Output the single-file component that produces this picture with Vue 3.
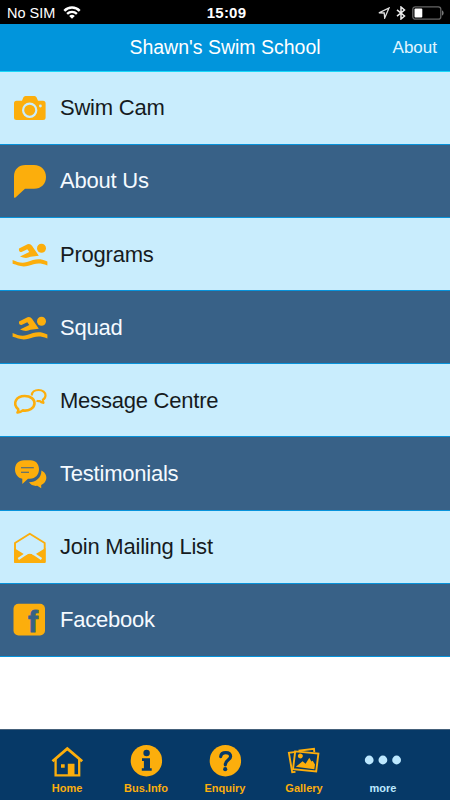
<template>
	<div class="screen">
		<header class="status-bar">
			<div class="carrier">
				<span>No SIM</span>
				<svg width="18" height="14" viewBox="0 0 18 14" fill="none" stroke="#fff" stroke-width="2.4">
					<path d="M1.300 4.800C5.500 .4 12.500 .4 16.700 4.800" />
					<path d="M4.100 7.900C6.900 5.200 11.100 5.200 13.900 7.900" />
					<path d="M6.200 9.900C8 8.500 10 8.500 11.800 9.900L9 12.700Z" fill="#fff" stroke="none" />
				</svg>
			</div>
			<div class="clock">15:09</div>
			<div class="indicators">
				<svg width="12" height="12" viewBox="0 0 12 12" fill="none" stroke="#ddd" stroke-width="1.3">
					<path d="M.9 5.800L11 1L6.700 11L6.200 6Z" />
				</svg>
				<svg width="10" height="14" viewBox="0 0 10 14" fill="none" stroke="#eee" stroke-width="1.5">
					<path d="M1 3.800L8.500 10L5 13V1L8.500 4L1 10.200" />
				</svg>
				<svg width="32" height="14" viewBox="0 0 32 14">
					<rect x=".8" y=".8" width="28" height="12.400" rx="2.500" fill="none" stroke="#666" stroke-width="1.300" />
					<rect x="2.500" y="2.500" width="7.800" height="9" rx="1" fill="#fff" />
					<path d="M30 4.500C32.200 5 32.200 9 30 9.500Z" fill="#777" />
				</svg>
			</div>
		</header>

		<nav class="nav-bar">
			<h1>Shawn's Swim School</h1>
			<a class="nav-action">About</a>
		</nav>

		<main class="menu">
			<div v-for="item in items" :key="item.label" class="menu-item">
				<svg class="menu-icon" viewBox="0 0 40 40">
					<template v-if="item.icon === 'camera'">
						<path class="solid" d="M6.500 12.700H12L13.300 9.500Q13.900 8 15.500 8H24.500Q26 8 26.600 9.500L28 12.700H33Q35.600 12.700 35.600 15.300V29.500Q35.600 32 33 32H6.500Q4 32 4 29.500V15.300Q4 12.700 6.500 12.700Z" />
						<circle class="line-cut" cx="19.700" cy="22.200" r="6.600" />
						<circle class="cut" cx="30.400" cy="18" r="1.400" />
					</template>
					<path v-else-if="item.icon === 'bubble'" class="solid" d="M4 36.300V15.500C4 8.500 8.500 4 15.500 4H24C31.300 4 36 9.200 36 16S31.300 27.800 24 27.800H15L5.500 36.400Q4 37.200 4 36.300Z" />
					<template v-else-if="item.icon === 'swimmer'">
						<circle class="solid" cx="31.500" cy="13.200" r="4.500" />
						<path class="solid" d="M9 13.500L17.500 9.300Q20.300 8.400 22 10.800L28.800 20.700L20.500 21.800Q16 24.200 10 21.500L19.300 17L17.300 14.300L11.500 17Q8.500 17 9 13.500Z" />
						<path class="solid" d="M2.600 25C7.500 27 11.500 28.800 17 27.100C24.500 24.500 28.500 22.500 37.400 26.400V30.400C28.500 26.900 24.500 29 18.500 30.700C11.500 32.700 8 30 2.600 28.800Z" />
					</template>
					<template v-else-if="item.icon === 'chat'">
						<path class="line" d="M8.200 28.300C1.800 22.300 6.500 15 14.700 15C20.700 15 24.500 18.200 24.500 22.300C24.500 27.500 18.500 30.300 12.800 29.400Q10.500 31.600 7.500 31.500Q8.700 29.900 8.200 28.300Z" />
						<path class="line thin" d="M21.800 14.500C21.800 11 24.700 9 28.600 9C32.800 9 35.500 11.500 35.500 14.300Q35.500 17.300 32.900 18.800Q32.800 20.600 33.500 21.800Q31 21.500 29.800 20Q27.800 20.300 26.500 19.800" />
					</template>
					<template v-else-if="item.icon === 'comments'">
						<path class="solid" d="M14 6.300H20.500C25.800 6.300 29 10.200 29 15.300S25.500 24.800 20 24.800H18L12.300 30V24.800C8 24 5 20.200 5 15.500C5 10 8.500 6.300 14 6.300Z" />
						<path class="solid" d="M31.400 16.500C36 18.500 38 24 34.800 28.200Q33.500 30 31.200 31V34.200L27.300 31.800C23.700 32.200 20.800 31 19 28.300C26 28 31.400 24 31.400 16.500Z" />
						<path class="stroke-cut" d="M11 13.700H23.800M11 18.300H19" />
					</template>
					<template v-else-if="item.icon === 'mail'">
						<path class="solid" d="M4.100 21L15.800 28.300Q19.800 24.800 23.800 28.300L35.500 21V34.500Q35.500 36 34 36H5.600Q4.100 36 4.100 34.500Z" />
						<path class="stroke-cut thick" d="M8.300 32L17.200 26Q19.800 24.700 22.500 26L31.500 32" />
						<path class="cut" d="M5 20.300L15.500 26.700Q19.800 23 24.200 26.700L34.700 20.300V16.300L19.800 7L5 16.300Z" />
						<path class="line envelope" d="M5 35V16L19.800 6.800L34.700 16V35Z" />
					</template>
					<template v-else>
						<rect class="solid" x="3.500" y="3.800" width="31.500" height="31.700" rx="5" />
						<text class="cut facebook-mark" x="18" y="31.800">f</text>
					</template>
				</svg>
				<span>{{ item.label }}</span>
			</div>
		</main>

		<footer class="tab-bar">
			<div v-for="tab in tabs" :key="tab.label" class="tab" :class="{ more: tab.icon === 'more' }">
				<svg class="tab-icon" viewBox="0 0 40 40">
					<template v-if="tab.icon === 'home'">
						<path class="roof" d="M5.500 20.200L20.300 7.700L35.200 20.200" />
						<path class="outline" d="M8.600 18V34.300H32.200V18" />
						<path class="solid" d="M20.800 22.700H27.500V34.500H20.800ZM14 23.200H17.700V26.800H14Z" />
					</template>
					<template v-else-if="tab.icon === 'info'">
						<circle class="solid" cx="20.400" cy="19.700" r="15.700" />
						<circle class="tab-cut" cx="20.600" cy="12" r="3.200" />
						<path class="tab-cut" d="M16 17.200H24V27.200H25.700V29.800H15.800V27.200H17.900V19.900H16Z" />
					</template>
					<template v-else-if="tab.icon === 'help'">
						<circle class="solid" cx="20.400" cy="19.700" r="15.700" />
						<path class="question" d="M15.700 15.600C16 12.800 18.200 11.600 20.800 11.600C23.600 11.600 25.600 13.100 25.600 15.600C25.600 19 20.500 18.800 20.300 23.800" />
						<circle class="tab-cut" cx="20.200" cy="28.200" r="2.100" />
					</template>
					<template v-else-if="tab.icon === 'gallery'">
						<path class="outline photo" d="M11.500 30.900L8.200 31.300L4.900 11.900L12 10.900M14.500 9.700L30 7.900L30.300 11" />
						<path class="outline photo" d="M11.200 10.400L34.400 12.600L32.200 30.400L9 28.200Z" />
						<path class="solid" d="M11.800 25.800L18.600 20.300L21.600 22.800L25.300 16.800L27.400 20.500L28.700 19.800L31 23.600L30.300 28.200ZM14 14.300A2.400 2.400 0 1 1 18.700 15.700A2.400 2.400 0 1 1 14 14.300Z" />
					</template>
					<template v-else>
						<circle class="solid" cx="6.200" cy="19" r="4.400" />
						<circle class="solid" cx="19.900" cy="19" r="4.400" />
						<circle class="solid" cx="33.600" cy="19" r="4.400" />
					</template>
				</svg>
				<span>{{ tab.label }}</span>
			</div>
		</footer>
	</div>
</template>

<script setup>
const items = [
	{ label: 'Swim Cam', icon: 'camera' },
	{ label: 'About Us', icon: 'bubble' },
	{ label: 'Programs', icon: 'swimmer' },
	{ label: 'Squad', icon: 'swimmer' },
	{ label: 'Message Centre', icon: 'chat' },
	{ label: 'Testimonials', icon: 'comments' },
	{ label: 'Join Mailing List', icon: 'mail' },
	{ label: 'Facebook', icon: 'facebook' },
]

const tabs = [
	{ label: 'Home', icon: 'home' },
	{ label: 'Bus.Info', icon: 'info' },
	{ label: 'Enquiry', icon: 'help' },
	{ label: 'Gallery', icon: 'gallery' },
	{ label: 'more', icon: 'more' },
]
</script>

<style>
body {
	margin: 0;
}
</style>

<style scoped>
.screen {
	display: flex;
	flex-direction: column;
	width: 450px;
	height: 800px;
	overflow: hidden;
	background: #fff;
	font-family: "Liberation Sans", Arial, sans-serif;
}

.status-bar {
	display: grid;
	grid-template-columns: 1fr auto 1fr;
	align-items: center;
	box-sizing: border-box;
	height: 24px;
	padding: 1px 6px 0 7px;
	background: #000;
	color: #fff;
	flex: none;
}

.carrier {
	display: flex;
	align-items: center;
	gap: 8px;
	font-size: 14.5px;
}

.clock {
	padding-left: 2px;
	font-size: 15px;
	font-weight: bold;
	letter-spacing: 0.2px;
}

.indicators {
	display: flex;
	justify-content: flex-end;
	align-items: center;
	gap: 6px;
}

.nav-bar {
	display: grid;
	grid-template-columns: 1fr auto 1fr;
	align-items: center;
	box-sizing: border-box;
	height: 47.7px;
	padding: 0 13px;
	border-bottom: 1px solid #1bd8f7;
	background: #0195dc;
	color: #fff;
	flex: none;
}

h1 {
	grid-column: 2;
	margin: 0;
	font-size: 19.5px;
	font-weight: normal;
}

.nav-action {
	justify-self: end;
	padding-top: 2px;
	color: #e2f5ff;
	font-size: 17px;
}

.menu {
	flex: 1;
}

.menu-item {
	display: flex;
	align-items: center;
	gap: 10px;
	box-sizing: border-box;
	height: 73.15px;
	padding: 1px 0 0 10px;
	border-bottom: 1px solid #0793db;
	background: #c9edfd;
	color: #161b1e;
	font-size: 22px;
	letter-spacing: -0.22px;
	--row: #c9edfd;
}

.menu-item:nth-child(even) {
	background: #386187;
	color: #f5faff;
	--row: #386187;
}

.menu-icon {
	width: 40px;
	height: 40px;
}

.solid {
	fill: #fcae0c;
}

.cut {
	fill: var(--row);
}

.line {
	fill: none;
	stroke: #fcae0c;
	stroke-width: 2.6;
	stroke-linejoin: round;
}

.thin {
	stroke-width: 2.2;
}

.envelope {
	stroke-width: 1.9;
}

.line-cut {
	fill: none;
	stroke: var(--row);
	stroke-width: 2.2;
}

.stroke-cut {
	fill: none;
	stroke: var(--row);
	stroke-width: 1.1;
}

.thick {
	stroke-width: 2.2;
}

.facebook-mark {
	font-size: 30px;
	font-weight: bold;
	stroke: var(--row);
	stroke-width: 0.8;
}

.tab-bar {
	display: flex;
	justify-content: center;
	box-sizing: border-box;
	height: 71px;
	padding-top: 11px;
	border-top: 1px solid #45617b;
	background: #063967;
	flex: none;
}

.tab {
	display: flex;
	flex-direction: column;
	align-items: center;
	width: 79px;
	color: #fcae0c;
	font-size: 11px;
	font-weight: bold;
}

.tab span {
	padding-top: 1px;
}

.tab-icon {
	width: 40px;
	height: 40px;
	overflow: visible;
}

.tab.more {
	color: #bce8ff;
}

.more .solid {
	fill: #bce8ff;
}

.roof {
	fill: none;
	stroke: #fcae0c;
	stroke-width: 2.8;
}

.outline {
	fill: none;
	stroke: #fcae0c;
	stroke-width: 2.3;
}

.photo {
	stroke-width: 1.9;
}

.tab-cut {
	fill: #063967;
}

.question {
	fill: none;
	stroke: #063967;
	stroke-width: 3.2;
	stroke-linecap: round;
}
</style>
